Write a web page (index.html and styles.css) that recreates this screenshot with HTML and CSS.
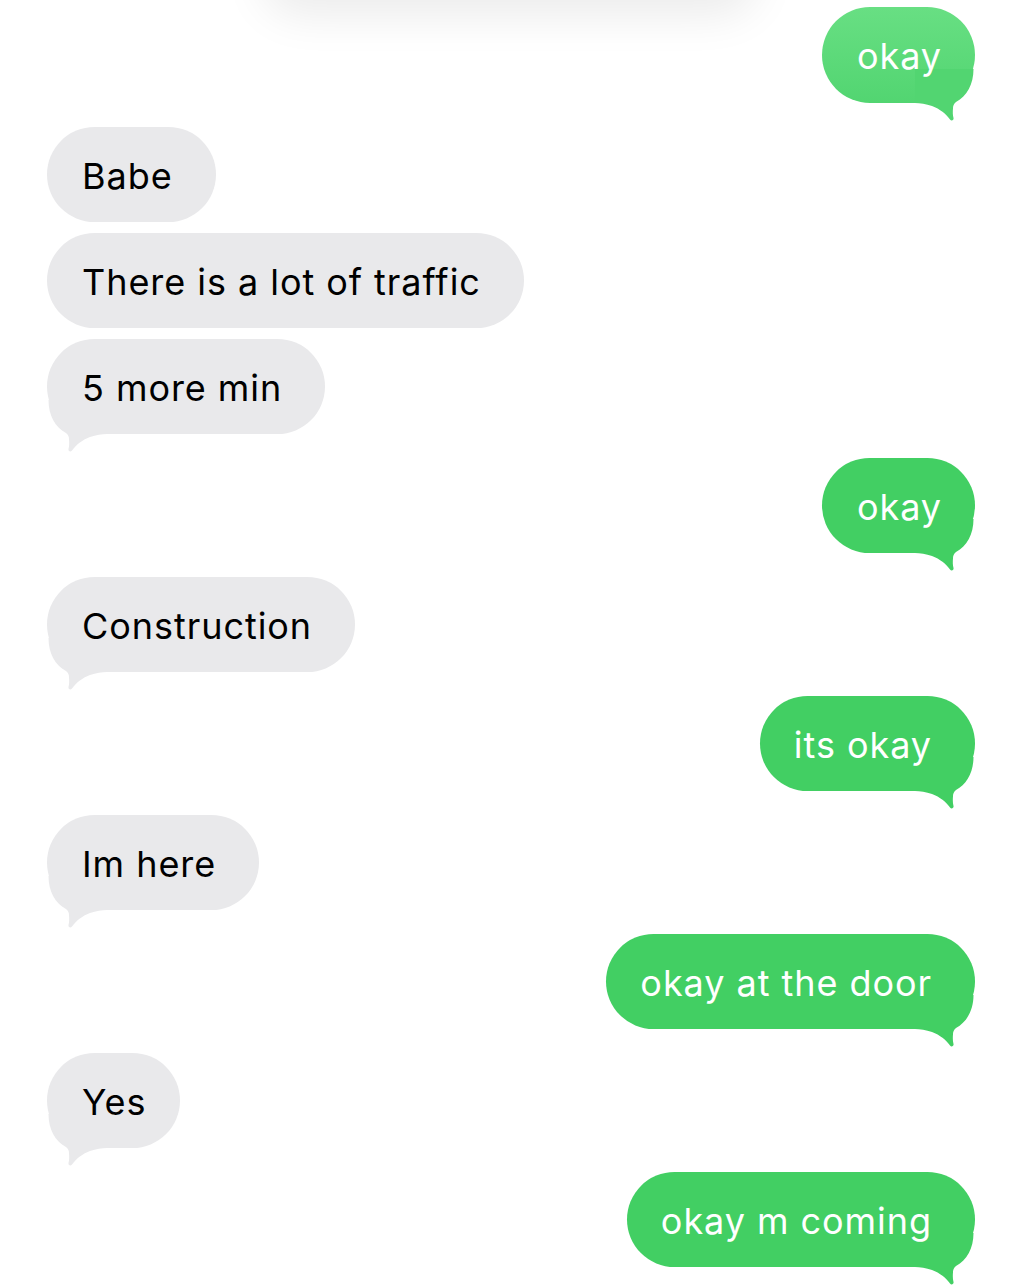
FILE: index.html
```html
<!DOCTYPE html>
<html>
<head>
<meta charset="utf-8">
<link rel="stylesheet" href="styles.css">
</head>
<body>
<div class="shadow"></div>
<div class="thread">
  <div class="msg sent short first"><svg class="tail-svg" viewBox="0 0 60 56"><path d="M1.5 0 C1.5 15 8 27 19 33 C21 34.5 22 36.5 22 39 C22.3 43 22.3 46 21.5 49 C21 51 23.5 52.5 25 50.5 C29 45 35 40 43 37 C49 35 55 34 60 34 L60 0 Z"/></svg><span class="txt">okay</span></div>
  <div class="msg recv"><span class="txt">Babe</span></div>
  <div class="msg recv near"><span class="txt">There is a lot of traffic</span></div>
  <div class="msg recv near"><svg class="tail-svg" viewBox="0 0 60 56"><path d="M1.5 0 C1.5 15 8 27 19 33 C21 34.5 22 36.5 22 39 C22.3 43 22.3 46 21.5 49 C21 51 23.5 52.5 25 50.5 C29 45 35 40 43 37 C49 35 55 34 60 34 L60 0 Z"/></svg><span class="txt">5 more min</span></div>
  <div class="msg sent short"><svg class="tail-svg" viewBox="0 0 60 56"><path d="M1.5 0 C1.5 15 8 27 19 33 C21 34.5 22 36.5 22 39 C22.3 43 22.3 46 21.5 49 C21 51 23.5 52.5 25 50.5 C29 45 35 40 43 37 C49 35 55 34 60 34 L60 0 Z"/></svg><span class="txt">okay</span></div>
  <div class="msg recv"><svg class="tail-svg" viewBox="0 0 60 56"><path d="M1.5 0 C1.5 15 8 27 19 33 C21 34.5 22 36.5 22 39 C22.3 43 22.3 46 21.5 49 C21 51 23.5 52.5 25 50.5 C29 45 35 40 43 37 C49 35 55 34 60 34 L60 0 Z"/></svg><span class="txt">Construction</span></div>
  <div class="msg sent"><svg class="tail-svg" viewBox="0 0 60 56"><path d="M1.5 0 C1.5 15 8 27 19 33 C21 34.5 22 36.5 22 39 C22.3 43 22.3 46 21.5 49 C21 51 23.5 52.5 25 50.5 C29 45 35 40 43 37 C49 35 55 34 60 34 L60 0 Z"/></svg><span class="txt">its okay</span></div>
  <div class="msg recv"><svg class="tail-svg" viewBox="0 0 60 56"><path d="M1.5 0 C1.5 15 8 27 19 33 C21 34.5 22 36.5 22 39 C22.3 43 22.3 46 21.5 49 C21 51 23.5 52.5 25 50.5 C29 45 35 40 43 37 C49 35 55 34 60 34 L60 0 Z"/></svg><span class="txt">Im here</span></div>
  <div class="msg sent"><svg class="tail-svg" viewBox="0 0 60 56"><path d="M1.5 0 C1.5 15 8 27 19 33 C21 34.5 22 36.5 22 39 C22.3 43 22.3 46 21.5 49 C21 51 23.5 52.5 25 50.5 C29 45 35 40 43 37 C49 35 55 34 60 34 L60 0 Z"/></svg><span class="txt">okay at the door</span></div>
  <div class="msg recv short"><svg class="tail-svg" viewBox="0 0 60 56"><path d="M1.5 0 C1.5 15 8 27 19 33 C21 34.5 22 36.5 22 39 C22.3 43 22.3 46 21.5 49 C21 51 23.5 52.5 25 50.5 C29 45 35 40 43 37 C49 35 55 34 60 34 L60 0 Z"/></svg><span class="txt">Yes</span></div>
  <div class="msg sent"><svg class="tail-svg" viewBox="0 0 60 56"><path d="M1.5 0 C1.5 15 8 27 19 33 C21 34.5 22 36.5 22 39 C22.3 43 22.3 46 21.5 49 C21 51 23.5 52.5 25 50.5 C29 45 35 40 43 37 C49 35 55 34 60 34 L60 0 Z"/></svg><span class="txt">okay m coming</span></div>
</div>
</body>
</html>
```
FILE: styles.css
```css
html, body {
  margin: 0;
  padding: 0;
  background: #ffffff;
  overflow: hidden;
}
body {
  width: 1024px;
  height: 1285px;
  position: relative;
  font-family: Inter, "Liberation Sans", Arial, sans-serif;
}
.shadow {
  position: absolute;
  top: -70px;
  left: 270px;
  width: 480px;
  height: 70px;
  border-radius: 30px;
  background: #f2f2f2;
  box-shadow: 0 8px 44px 8px rgba(0, 0, 0, 0.08);
}
.thread {
  display: flex;
  flex-direction: column;
  padding: 7px 49px 0 47px;
  gap: 24px;
}
.msg {
  position: relative;
  height: 95px;
  padding-top: 4px;
  line-height: 91px;
  border-radius: 48px;
  font-size: 36px;
  letter-spacing: 0.95px;
  white-space: nowrap;
  box-sizing: border-box;
}
.txt {
  position: relative;
}
.msg.near {
  margin-top: -13px;
}
.recv {
  align-self: flex-start;
  background: #e9e9eb;
  color: #000000;
  padding-left: 35px;
  padding-right: 43px;
}
.sent {
  align-self: flex-end;
  background: #42cf63;
  color: #ffffff;
  padding-left: 34px;
  padding-right: 43px;
}
.msg.short {
  padding-left: 35px;
  padding-right: 33px;
}
.sent.first {
  background: linear-gradient(#68df83, #52d571);
  height: 96px;
}
.tail-svg {
  position: absolute;
  top: calc(100% - 34px);
  width: 60px;
  height: 56px;
  pointer-events: none;
}
.recv .tail-svg {
  left: 0;
  fill: #e9e9eb;
}
.sent .tail-svg {
  right: 0;
  fill: #42cf63;
  transform: scaleX(-1);
}
.sent.first .tail-svg {
  fill: #52d571;
}
```
